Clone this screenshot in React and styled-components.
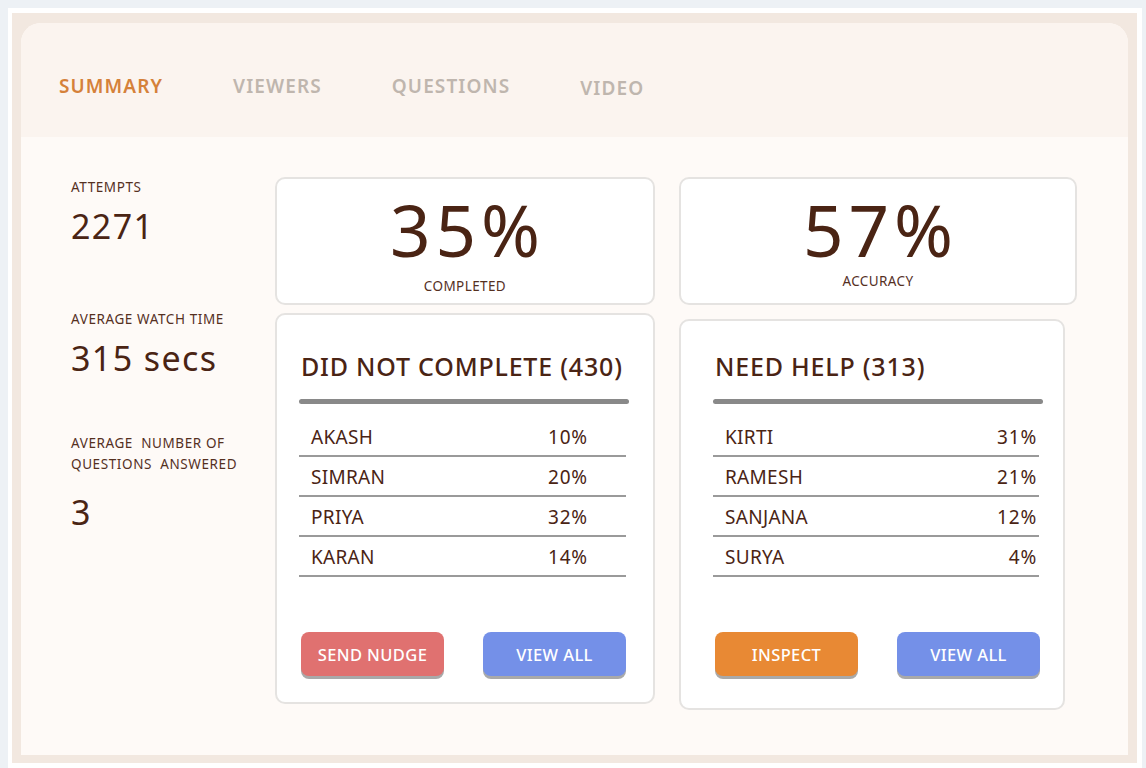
import React from 'react'
import styled, { createGlobalStyle } from 'styled-components'

const Global = createGlobalStyle`
  html, body { margin: 0; padding: 0; background: #edf1f5; }
  body { font-family: "Noto Sans", "Open Sans", sans-serif; color: #4a2414; }
  * { box-sizing: border-box; }
`

const Frame = styled.div`
  margin: 8px 4px 3px 8px;
  background: #fff;
  padding: 5px 5px 7px 4px;
`

const Beige = styled.div`
  background: #f2e8e0;
  padding: 10px 9px 8px 9px;
`

const Panel = styled.div`
  background: #fefaf7;
  border-radius: 20px 20px 0 0;
  overflow: hidden;
`

const Tabs = styled.div`
  height: 114px;
  background: #fbf4ef;
  display: flex;
  align-items: center;
  padding: 12px 0 0 38px;
  gap: 70px;
`

const Tab = styled.div`
  font-size: 19px;
  font-weight: 600;
  letter-spacing: 1.1px;
  color: ${p => (p.active ? '#d5813a' : '#bfb6ae')};
  margin-top: ${p => p.drop || 0}px;
`

const Body = styled.div`
  display: flex;
  padding: 40px 0 45px 50px;
`

const Side = styled.div`
  width: 204px;
  display: flex;
  flex-direction: column;
`

const StatLabel = styled.div`
  font-size: 13.5px;
  line-height: 21px;
  letter-spacing: 0.6px;
  color: #55301f;
`

const StatValue = styled.div`
  font-size: 34px;
  line-height: 40px;
  letter-spacing: 1.4px;
  margin-top: ${p => p.gap || 6}px;
  margin-bottom: ${p => p.after || 0}px;
  color: #4a2414;
`

const Columns = styled.div`
  display: flex;
  gap: 24px;
`

const Col = styled.div`
  display: flex;
  flex-direction: column;
  gap: ${p => p.gap}px;
`

const Card = styled.div`
  width: ${p => p.w}px;
  height: ${p => p.h}px;
  background: #fff;
  border: 2px solid #e5e3e1;
  border-radius: 10px;
`

const BigCard = styled(Card)`
  display: flex;
  flex-direction: column;
  align-items: center;
  padding-top: ${p => p.pt}px;
`

const Big = styled.div`
  font-size: 71px;
  line-height: 70px;
  letter-spacing: 5px;
  padding-left: 5px;
  color: #4a2414;
`

const BigLabel = styled.div`
  font-size: 13.5px;
  line-height: 16px;
  letter-spacing: 0.4px;
  color: #55301f;
  margin-top: ${p => p.mt}px;
`

const ListCard = styled(Card)`
  display: flex;
  flex-direction: column;
  padding: ${p => p.pt}px 0 0 ${p => p.pl}px;
`

const Title = styled.div`
  font-size: 25px;
  font-weight: 500;
  letter-spacing: 0.8px;
  color: #4a2414;
  margin-left: ${p => p.ml || 0}px;
`

const Bar = styled.div`
  width: 330px;
  height: 5px;
  border-radius: 3px;
  background: #898989;
  margin-top: 16px;
  margin-bottom: 13px;
`

const Row = styled.div`
  width: ${p => p.w}px;
  height: 40px;
  display: flex;
  align-items: center;
  justify-content: space-between;
  border-bottom: 2px solid #9a9a9a;
  padding: 2px ${p => p.pr}px 0 12px;
  font-size: 19px;
  letter-spacing: 0.3px;
  color: #4a2414;
`

const Pct = styled.span`
  width: ${p => p.w}px;
  text-align: ${p => p.align};
  letter-spacing: 0.8px;
`

const Buttons = styled.div`
  display: flex;
  gap: 39px;
  margin-top: 55px;
  margin-left: 2px;
`

const Btn = styled.div`
  width: 143px;
  height: 44px;
  border-radius: 8px;
  background: ${p => p.bg};
  color: #fff;
  font-size: 16.5px;
  font-weight: 500;
  display: flex;
  align-items: center;
  justify-content: center;
  box-shadow: 0 3px 0 #a9a9a9;
  letter-spacing: 0.4px;
`

const left = [
  ['AKASH', '10%'],
  ['SIMRAN', '20%'],
  ['PRIYA', '32%'],
  ['KARAN', '14%'],
]
const right = [
  ['KIRTI', '31%'],
  ['RAMESH', '21%'],
  ['SANJANA', '12%'],
  ['SURYA', '4%'],
]

export default function App() {
  return (
    <>
      <Global />
      <Frame>
        <Beige>
          <Panel>
            <Tabs>
              <Tab active>SUMMARY</Tab>
              <Tab>VIEWERS</Tab>
              <Tab>QUESTIONS</Tab>
              <Tab drop={4}>VIDEO</Tab>
            </Tabs>
            <Body>
              <Side>
                <StatLabel>ATTEMPTS</StatLabel>
                <StatValue gap={8} after={63}>2271</StatValue>
                <StatLabel>AVERAGE WATCH TIME</StatLabel>
                <StatValue gap={8} after={55}>315 secs</StatValue>
                <StatLabel>AVERAGE&nbsp; NUMBER OF<br />QUESTIONS&nbsp; ANSWERED</StatLabel>
                <StatValue gap={17}>3</StatValue>
              </Side>
              <Columns>
                <Col gap={8}>
                  <BigCard w={380} h={128} pt={16}>
                    <Big>35%</Big>
                    <BigLabel mt={13}>COMPLETED</BigLabel>
                  </BigCard>
                  <ListCard w={380} h={391} pl={22} pt={34}>
                    <Title ml={2}>DID NOT COMPLETE (430)</Title>
                    <Bar />
                    {left.map(([n, p]) => (
                      <Row key={n} w={327} pr={0}>
                        <span>{n}</span>
                        <Pct w={78} align="left">{p}</Pct>
                      </Row>
                    ))}
                    <Buttons>
                      <Btn bg="#e07170">SEND NUDGE</Btn>
                      <Btn bg="#7490e8">VIEW ALL</Btn>
                    </Buttons>
                  </ListCard>
                </Col>
                <Col gap={14}>
                  <BigCard w={398} h={128} pt={16}>
                    <Big>57%</Big>
                    <BigLabel mt={8}>ACCURACY</BigLabel>
                  </BigCard>
                  <ListCard w={386} h={391} pl={32} pt={28}>
                    <Title ml={2}>NEED HELP (313)</Title>
                    <Bar />
                    {right.map(([n, p]) => (
                      <Row key={n} w={326} pr={2}>
                        <span>{n}</span>
                        <Pct w={60} align="right">{p}</Pct>
                      </Row>
                    ))}
                    <Buttons>
                      <Btn bg="#e88934">INSPECT</Btn>
                      <Btn bg="#7490e8">VIEW ALL</Btn>
                    </Buttons>
                  </ListCard>
                </Col>
              </Columns>
            </Body>
          </Panel>
        </Beige>
      </Frame>
    </>
  )
}
